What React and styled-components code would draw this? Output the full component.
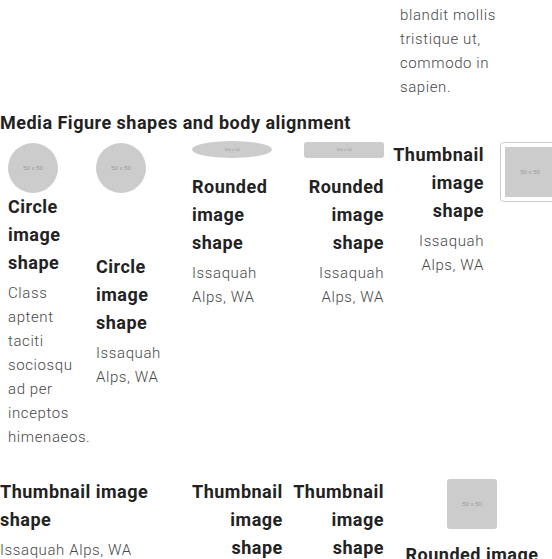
import React from 'react'
import styled, { createGlobalStyle } from 'styled-components'

const GlobalStyle = createGlobalStyle`
  html, body {
    margin: 0;
    padding: 0;
    background: #fff;
    overflow: hidden;
  }
  body {
    font-family: Roboto, "Liberation Sans", sans-serif;
    color: #222;
  }
`

const Page = styled.div`
  width: 552px;
  height: 559px;
  overflow: hidden;
`

const PrevTail = styled.div`
  padding: 3px 0 0 400px;
`

const Body = styled.p`
  margin: ${p => p.$gap ?? 4}px 0 0;
  font-size: 15px;
  font-weight: 300;
  line-height: 24px;
  color: #484848;
  letter-spacing: 0.6px;
`

const SectionTitle = styled.h2`
  margin: 10px 0 4px;
  font-size: 18px;
  font-weight: 700;
  line-height: 28px;
  color: #222;
  letter-spacing: 0.5px;
`

const Row = styled.div`
  display: flex;
  align-items: stretch;
  margin-top: ${p => p.$top || 0}px;
`

const Item = styled.div`
  flex: 0 0 ${p => p.$width}px;
  box-sizing: border-box;
  padding-left: ${p => p.$pad || 0}px;
  display: flex;
  flex-direction: ${p => p.$dir || 'column'};
  align-items: ${p => p.$align || 'flex-start'};
  text-align: ${p => p.$text || 'left'};
`

const MediaBody = styled.div`
  width: ${p => p.$width ? `${p.$width}px` : 'auto'};
  flex: ${p => p.$grow ? 1 : 'none'};
  display: flex;
  flex-direction: column;
  justify-content: ${p => p.$justify || 'flex-start'};
  flex-shrink: 0;
`

const Title = styled.h3`
  margin: 0;
  font-size: 18px;
  font-weight: 700;
  line-height: 28px;
  color: #222;
  letter-spacing: 0.5px;
`

const Placeholder = styled.div`
  flex-shrink: 0;
  width: ${p => p.$w}px;
  height: ${p => p.$h}px;
  margin: ${p => p.$margin || 0};
  background: #ccc;
  border-radius: ${p => p.$radius || 0};
  display: flex;
  align-items: center;
  justify-content: center;
  font-family: "Liberation Sans", sans-serif;
  font-size: ${p => p.$label || 6}px;
  color: #999;
  line-height: 1;
`

const Thumb = styled.div`
  flex-shrink: 0;
  margin: 1px 0 0 16px;
  padding: 4px;
  border: 1px solid #ccc;
  border-radius: 4px;
  align-self: flex-start;
`

export default function App () {
  return (
    <Page>
      <GlobalStyle />
      <PrevTail>
        <Body $gap={0} style={{ width: 110 }}>blandit mollis tristique ut, commodo in sapien.</Body>
      </PrevTail>

      <SectionTitle>Media Figure shapes and body alignment</SectionTitle>

      <Row>
        <Item $width={96} $pad={8}>
          <Placeholder $w={50} $h={50} $radius='50%' $margin='2px 0 0'>50 x 50</Placeholder>
          <MediaBody $width={84}>
            <Title>Circle image shape</Title>
            <Body>Class aptent taciti sociosqu ad per inceptos himenaeos.</Body>
          </MediaBody>
        </Item>

        <Item $width={96}>
          <Placeholder $w={50} $h={50} $radius='50%' $margin='2px 0 0'>50 x 50</Placeholder>
          <MediaBody $width={80} $grow $justify='center'>
            <Title>Circle image shape</Title>
            <Body>Issaquah Alps, WA</Body>
          </MediaBody>
        </Item>

        <Item $width={96}>
          <Placeholder $w={80} $h={17} $radius='50%' $label={4} $margin='0 0 15px'>350 x 50</Placeholder>
          <MediaBody $width={92}>
            <Title>Rounded image shape</Title>
            <Body>Issaquah Alps, WA</Body>
          </MediaBody>
        </Item>

        <Item $width={96} $align='flex-end' $text='right'>
          <Placeholder $w={80} $h={16} $radius='3px' $label={4} $margin='1px 0 15px'>350 x 50</Placeholder>
          <MediaBody $width={96}>
            <Title>Rounded image shape</Title>
            <Body>Issaquah Alps, WA</Body>
          </MediaBody>
        </Item>

        <Item $width={176} $pad={6} $dir='row' $text='right'>
          <MediaBody $width={94}>
            <Title>Thumbnail image shape</Title>
            <Body>Issaquah Alps, WA</Body>
          </MediaBody>
          <Thumb>
            <Placeholder $w={50} $h={50}>50 x 50</Placeholder>
          </Thumb>
        </Item>
      </Row>

      <Row $top={29}>
        <Item $width={192}>
          <MediaBody $width={184}>
            <Title>Thumbnail image shape</Title>
            <Body>Issaquah Alps, WA</Body>
          </MediaBody>
        </Item>

        <Item $width={96} $text='right'>
          <MediaBody style={{ width: 'min-content' }}>
            <Title>Thumbnail image shape</Title>
          </MediaBody>
        </Item>

        <Item $width={96} $align='flex-end' $text='right'>
          <MediaBody style={{ width: 'min-content' }}>
            <Title>Thumbnail image shape</Title>
          </MediaBody>
        </Item>

        <Item $width={168} $pad={8} $align='center' $text='center'>
          <Placeholder $w={50} $h={50} $radius='3px' $margin='1px 0 12px'>50 x 50</Placeholder>
          <MediaBody>
            <Title>Rounded image shape</Title>
          </MediaBody>
        </Item>
      </Row>
    </Page>
  )
}
